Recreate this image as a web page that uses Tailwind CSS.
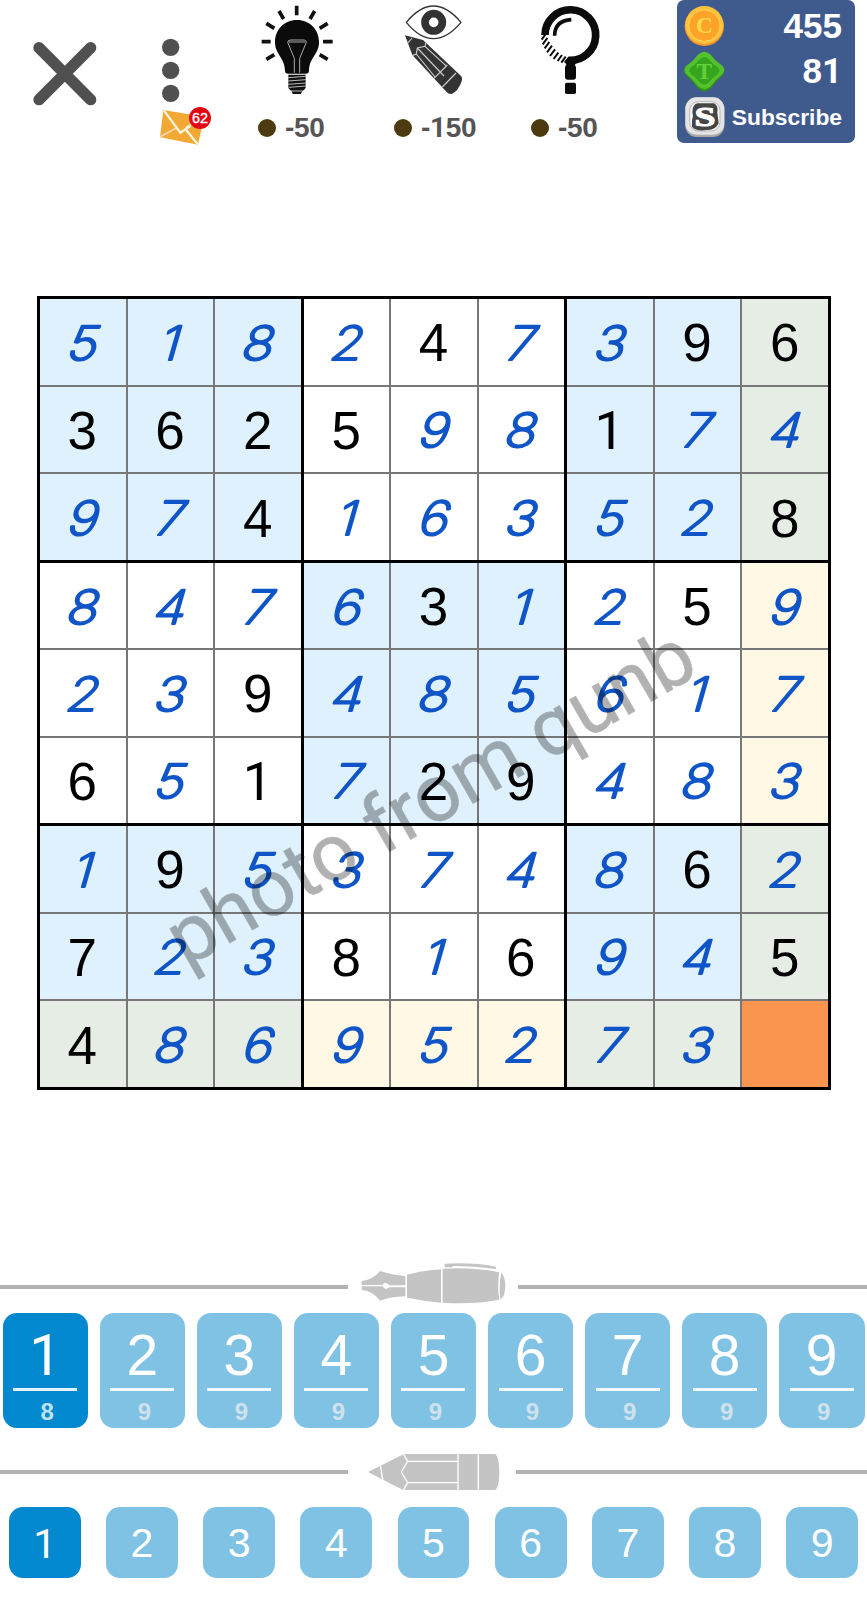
<!DOCTYPE html>
<html lang="en">
<head>
    <meta charset="UTF-8">
    <meta name="viewport" content="width=device-width, initial-scale=1.0">
    <title>Sudoku</title>
    <script src="https://cdn.jsdelivr.net/npm/@tailwindcss/browser@4"></script>
</head>
<body class="bg-white font-['Liberation_Sans',Arial,sans-serif]">
    <main class="relative flex h-[1600px] w-[867px] flex-col overflow-hidden">

        <!-- Top bar -->
        <header class="flex h-[296px] items-start">
            <button class="w-[130px] pt-[38px] pl-[30px]" aria-label="Close">
                <svg class="h-[70px] w-[70px]" viewBox="90 114 210 210" stroke="#505050" stroke-width="34" stroke-linecap="round">
                    <path d="M117 143 L272 299 M272 143 L117 299"/>
                </svg>
            </button>

            <button class="w-[110px] pt-[36px] pl-[26px]" aria-label="Menu">
                <svg class="h-[112px] w-[60px]" viewBox="468 108 180 336">
                    <g fill="#505050">
                        <circle cx="512" cy="142" r="26"/>
                        <circle cx="512" cy="211" r="26"/>
                        <circle cx="512" cy="280" r="26"/>
                    </g>
                    <path d="M490 330 L612 350 L594 434 L480 412Z" fill="#f3a833"/>
                    <path d="M480 411 L530 383 M556 383 L604 352" stroke="#f8d9b0" stroke-width="5" fill="none"/>
                    <path d="M492 332 L541 398 L572 377 M556 387 L593 433" stroke="#fff6dc" stroke-width="7" fill="none"/>
                    <circle cx="600" cy="354" r="33" fill="#e30613"/>
                    <text x="600" y="370" text-anchor="middle" font-size="43" fill="#fff" stroke="#fff" stroke-width="1">62</text>
                </svg>
            </button>

            <button class="flex h-[150px] w-[137px] flex-col items-start pt-[3px]">
                <svg class="ml-[20px] h-[94px] w-[75px]" viewBox="60 10 225 282">
                    <path d="M170 18V47 M117 34L131 58 M224 34L210 58 M79 71L103 86 M263 71L239 86 M65 126H92 M249 126H278 M79 179L103 165 M263 179L239 165" stroke="#111" stroke-width="11"/>
                    <path d="M171 61C132 61 105 90 105 128C105 164 134 173 135 213Q135 222 145 222H197Q207 222 207 213C208 173 237 164 237 128C237 90 210 61 171 61Z" fill="#0b0b0b"/>
                    <path d="M163 219V176L143 128Q143 121 153 121H189Q200 121 199 128L179 176V219 M145 127H197" stroke="#aaa" stroke-width="3" fill="none"/>
                    <path d="M145 225H197V264Q193 272 187 273L183 283H158L155 273Q149 272 145 264Z" fill="#111"/>
                    <path d="M144 234L198 230 M144 244L198 240 M144 254L198 250 M146 263L198 259 M155 274H188" stroke="#bbb" stroke-width="3"/>
                </svg>
                <span class="mt-[15px] ml-[18px] flex items-center gap-[9px]">
                    <span class="h-[18px] w-[18px] rounded-full bg-[#4d3a0e]"></span>
                    <span class="text-[28px] leading-[32px] font-bold tracking-[-0.3px] text-[#555]">-50</span>
                </span>
            </button>

            <button class="flex h-[150px] w-[137px] flex-col items-start pt-[3px]">
                <svg class="ml-[26px] h-[94px] w-[62px]" viewBox="489 10 186 282">
                    <path d="M499 68Q580 -30 663 68Q580 166 499 68Z" fill="#fff" stroke="#333" stroke-width="4"/>
                    <circle cx="581" cy="68" r="26" fill="none" stroke="#333" stroke-width="23"/>
                    <path d="M495 107L549 121L660 226Q670 233 664 248Q654 275 635 283Q628 284 622 279L517 166Z" fill="#333"/>
                    <path d="M502 132L516 115 M518 167L529 163L532 145L555 140L558 127 M529 163L585 232 M532 145L612 229 M555 140L620 200 M582 236L622 196 M607 262L648 220" stroke="#ccc" stroke-width="3.5" fill="none"/>
                </svg>
                <span class="mt-[15px] ml-[17px] flex items-center gap-[9px]">
                    <span class="h-[18px] w-[18px] rounded-full bg-[#4d3a0e]"></span>
                    <span class="text-[28px] leading-[32px] font-bold tracking-[-0.3px] text-[#555]">-<span class="font-['Roboto',sans-serif]">1</span>50</span>
                </span>
            </button>

            <button class="flex h-[150px] w-[163px] flex-col items-start pt-[3px]">
                <svg class="ml-[24px] h-[94px] w-[64px]" viewBox="144 10 192 282" fill="none" stroke="#0b0b0b">
                    <path d="M165 106A76 76 0 1 1 235 182" stroke-width="23"/>
                    <path d="M155 120l12 -17 M158 134l14 -19 M164 146l14 -19 M171 158l15 -20 M180 169l15 -20 M191 178l14 -19 M203 184l13 -18 M214 189l13 -18" stroke-width="6"/>
                    <path d="M194 108Q194 63 244 60" stroke-width="11"/>
                    <path d="M222 186L235 171L262 178L255 196L258 203V233Q258 240 251 240H232Q225 240 225 233V203L229 194Z" fill="#0b0b0b" stroke="none"/>
                    <rect x="225" y="249" width="33" height="34" rx="5" fill="#0b0b0b" stroke="none"/>
                </svg>
                <span class="mt-[15px] ml-[17px] flex items-center gap-[9px]">
                    <span class="h-[18px] w-[18px] rounded-full bg-[#4d3a0e]"></span>
                    <span class="text-[28px] leading-[32px] font-bold tracking-[-0.3px] text-[#555]">-50</span>
                </span>
            </button>

            <!-- Wallet -->
            <div class="h-[143px] w-[178px] rounded-[7px] bg-[#3f5b8e] pt-[3px] pr-[13px] pl-[7px] font-bold text-white">
                <div class="flex h-[46px] items-center justify-between">
                    <svg class="h-[42px] w-[42px]" viewBox="0 0 126 126">
                        <circle cx="61" cy="64" r="59" fill="#f9932c"/>
                        <circle cx="61" cy="60" r="57" fill="#ffc23c"/>
                        <circle cx="61" cy="62" r="47" fill="#fda428" stroke="#ffd35a" stroke-width="3"/>
                        <text x="61" y="85" text-anchor="middle" font-family="Liberation Serif" font-size="70" fill="#ffd84a">C</text>
                    </svg>
                    <span class="text-[35px] leading-[46px]">455</span>
                </div>
                <div class="flex h-[45px] items-center justify-between">
                    <svg class="h-[42px] w-[42px]" viewBox="0 0 126 126">
                        <path d="M42 12Q61 -4 80 12Q95 34 115 47Q127 61 115 74Q97 88 80 112Q61 130 42 112Q25 88 7 74Q-5 61 7 47Q27 34 42 12Z" fill="#309414"/>
                        <path d="M42 11Q61 -6 80 11Q95 31 115 44Q127 57 115 69Q97 83 80 106Q61 123 42 106Q25 83 7 69Q-5 57 7 44Q27 31 42 11Z" fill="#52c12b"/>
                        <path d="M47 23Q61 10 75 23Q88 39 104 49Q113 59 104 69Q88 79 75 96Q61 109 47 96Q34 79 18 69Q9 59 18 49Q34 39 47 23Z" fill="#36a51c" stroke="#66cf3c" stroke-width="2"/>
                        <text x="61" y="83" text-anchor="middle" font-family="Liberation Serif" font-size="70" fill="#62cf3c">T</text>
                    </svg>
                    <span class="text-[35px] leading-[46px]">8<span class="font-['Roboto',sans-serif]">1</span></span>
                </div>
                <div class="flex h-[46px] items-center justify-between">
                    <svg class="h-[42px] w-[42px]" viewBox="0 0 126 126">
                        <rect x="4" y="4" width="117" height="119" rx="34" fill="#aaa"/>
                        <rect x="4" y="4" width="117" height="112" rx="34" fill="#e4e4e7"/>
                        <rect x="17" y="17" width="91" height="88" rx="26" fill="#f7f7f7" stroke="#b5b5b5" stroke-width="3"/>
                        <path d="M40 22H90Q104 30 100 50L104 82Q94 104 68 102Q36 107 24 92V72Q30 61 25 50Q25 26 40 22Z" fill="#454545"/>
                        <text transform="translate(63 90) scale(1.35 1)" text-anchor="middle" font-family="Liberation Serif" font-size="84" fill="#fff" stroke="#fff" stroke-width="3">S</text>
                    </svg>
                    <span class="text-[22.8px] leading-[46px]">Subscribe</span>
                </div>
            </div>
        </header>

        <!-- Board: nine boxes of nine cells, filled below -->
        <section id="board" class="ml-[37px] grid h-[794px] w-[794px] grid-cols-[261px_260px_261px] grid-rows-[261px_260px_261px] gap-[3px] border-[3px] border-black bg-black"></section>

        <!-- Pen -->
        <div class="mt-[171px] flex h-[52px] items-center">
            <div class="h-[4px] w-[348px] bg-[#b3b3b3]"></div>
            <svg class="ml-[12px] h-[51px] w-[147px]" viewBox="60 35 441 153" fill="#c4c4c4">
                <path d="M65 92Q100 88 120 62Q155 74 196 77V138Q155 139 120 151Q100 122 65 118V108H128Q136 122 147 111H196V105H148Q136 90 127 104H65Z"/>
                <path d="M201 73Q250 60 303 57V157Q250 152 201 142Z"/>
                <path d="M308 55Q400 50 478 66Q471 105 478 148Q400 163 308 157Z"/>
                <path d="M484 68Q496 78 496 108Q495 138 482 148Q475 106 484 68Z"/>
                <path d="M314 40Q400 36 468 49V56Q400 47 340 47L334 51H314Z"/>
            </svg>
            <div class="ml-[11px] h-[4px] flex-1 bg-[#b3b3b3]"></div>
        </div>
        <section id="penKeys" class="grid h-[115px] grid-cols-9 gap-[11.5px] px-[2.5px]"></section>

        <!-- Pencil -->
        <div class="mt-[24px] flex h-[40px] items-center">
            <div class="h-[4px] w-[348px] bg-[#b3b3b3]"></div>
            <svg class="ml-[19px] h-[40px] w-[133px]" viewBox="81 606 399 120" fill="#c4c4c4">
                <path d="M84 666L192 612H466Q478 622 478 666Q478 710 466 720H189Z"/>
                <path d="M121 644L128 690 M190 612L203 634L184 666L203 698L190 720 M203 634H353 M203 698H353 M354 611V721 M415 611V721" stroke="#fff" stroke-width="4" fill="none"/>
            </svg>
            <div class="ml-[16px] h-[4px] flex-1 bg-[#b3b3b3]"></div>
        </div>
        <section id="pencilKeys" class="mt-[15px] grid h-[71px] grid-cols-9 gap-[25.4px] px-[9px]"></section>

        <!-- Watermark over the board -->
        <svg class="pointer-events-none absolute top-0 left-0 h-[1600px] w-[867px]" viewBox="0 0 867 1600">
            <text class="font-['Roboto',sans-serif] opacity-30" transform="translate(186 968) rotate(-29.8)" font-size="80" fill="#000" stroke="#000" stroke-width="0.6">photo from qunb</text>
        </svg>
    </main>

    <script>
        const board = document.getElementById("board");
        const penKeys = document.getElementById("penKeys");
        const pencilKeys = document.getElementById("pencilKeys");

        const solution = ["518247396", "362598174", "974163528", "847631259", "239485617", "651729483", "195374862", "723816945", "48695273 "];

        // x = given digit, . = digit entered by the player
        const givens = ["....x..xx", "xxxx..x..", "..x.....x", "....x..x.", "..x......", "x.x.xx...", ".x.....x.", "x..x.x..x", "x........"];

        // Background of a cell: selected, same row or column, or its box
        function cellColor(row, col) {
            const tinted = (Math.floor(row / 3) + Math.floor(col / 3)) % 2 === 0;
            if (row === 8 && col === 8) return "bg-[#f9954f]";
            if (row === 8 || col === 8) return tinted ? "bg-[#e6ede4]" : "bg-[#fff8e5]";
            return tinted ? "bg-[#dff1fd]" : "bg-white";
        }

        // The plain 1 without a foot comes from Roboto, which sits a little higher
        function digitFont(n) {
            return n == 1 ? "font-['Roboto',sans-serif] translate-y-[1px]" : "";
        }

        // Player digits are wide and slanted, with round pen strokes
        function penDigit(n) {
            return `
                <svg class="h-[60px] w-[60px]" viewBox="0 0 60 60">
                    <text class="font-['Inter',sans-serif] font-extralight" transform="translate(27 48) skewX(-16) scale(1.12 1)" text-anchor="middle" font-size="47" fill="#0f55c8" stroke="#0f55c8" stroke-width="2.2" stroke-linejoin="round">${n}</text>
                </svg>`;
        }

        for (let box = 0; box < 9; box++) {
            let content = "";
            for (let i = 0; i < 9; i++) {
                const row = Math.floor(box / 3) * 3 + Math.floor(i / 3);
                const col = (box % 3) * 3 + (i % 3);
                const n = solution[row][col];
                const digit = givens[row][col] === "x"
                    ? `<span class="mt-[2px] mr-[1px] text-[53px] leading-none ${digitFont(n)}">${n}</span>`
                    : penDigit(n);
                content += `<div class="flex items-center justify-center ${cellColor(row, col)}">${digit}</div>`;
            }
            board.innerHTML += `<div class="grid grid-cols-3 grid-rows-3 gap-[2px] bg-[#777]">${content}</div>`;
        }

        for (let n = 1; n <= 9; n++) {
            const color = n === 1 ? "bg-[#0288cf]" : "bg-[#80c2e4]";
            const left = n === 1 ? "text-[#bfe3f2]" : "text-[#cfe1ec]";
            penKeys.innerHTML += `
                <button class="flex flex-col items-center rounded-[14px] text-white ${color}">
                    <span class="mt-[12px] text-[57px] leading-[60px] ${digitFont(n)}">${n}</span>
                    <span class="mt-[3px] h-[3px] w-[64px] bg-white/90"></span>
                    <span class="mt-[7px] ml-[4px] text-[24px] leading-[28px] font-bold ${left}">${n === 1 ? 8 : 9}</span>
                </button>`;
            pencilKeys.innerHTML += `
                <button class="rounded-[14px] pt-[2px] text-[41px] leading-none text-white ${color}"><span class="inline-block ${digitFont(n)}">${n}</span></button>`;
        }
    </script>
</body>
</html>
